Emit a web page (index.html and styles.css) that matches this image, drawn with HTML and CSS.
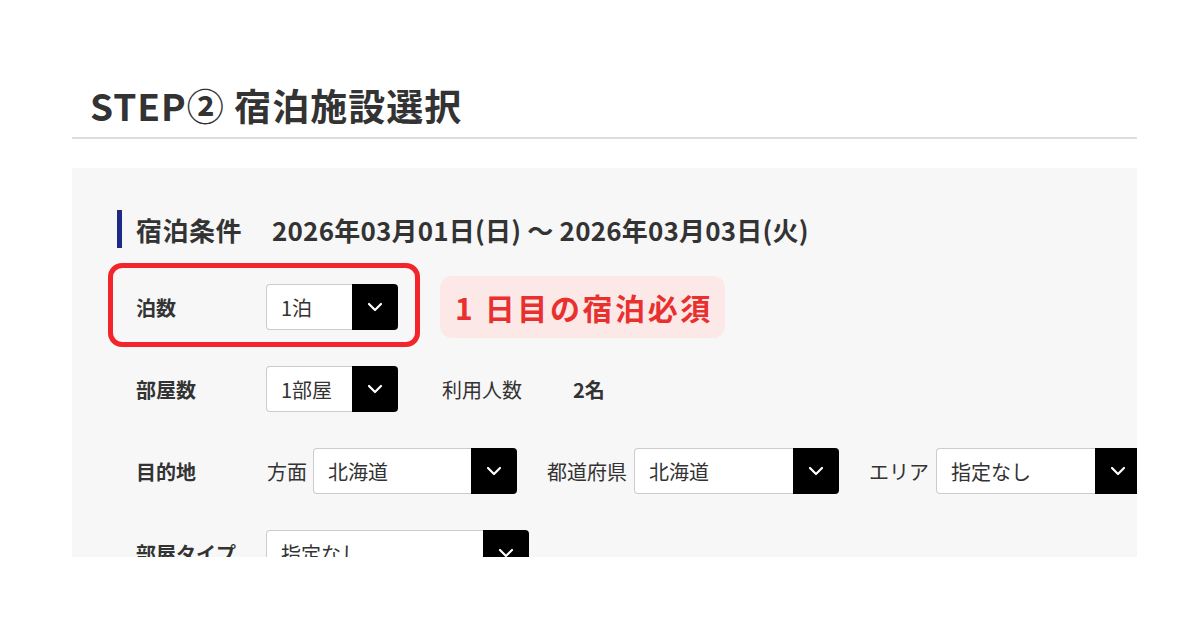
FILE: index.html
```html
<!DOCTYPE html>
<html lang="ja">
<head>
<meta charset="utf-8">
<title>STEP② 宿泊施設選択</title>
<link rel="stylesheet" href="styles.css">
</head>
<body>
<div class="page">
  <h1 class="title">STEP② 宿泊施設選択</h1>
  <section class="panel">
    <div class="cond-head">
      <span class="bar"></span>
      <span class="cond-label">宿泊条件</span>
      <span class="cond-date">2026年03月01日(日) 〜 2026年03月03日(火)</span>
    </div>
    <div class="rows">
      <div class="row">
        <div class="label">泊数</div>
        <div class="select w-s">
          <span class="val">1泊</span>
          <span class="btn"><svg width="16" height="10" viewBox="0 0 16 10"><path d="M2 2 L8 8 L14 2" fill="none" stroke="#fff" stroke-width="2.2" stroke-linecap="round" stroke-linejoin="round"/></svg></span>
        </div>
        <div class="badge">1 日目の宿泊必須</div>
        <div class="highlight"></div>
      </div>
      <div class="row">
        <div class="label">部屋数</div>
        <div class="select w-s">
          <span class="val">1部屋</span>
          <span class="btn"><svg width="16" height="10" viewBox="0 0 16 10"><path d="M2 2 L8 8 L14 2" fill="none" stroke="#fff" stroke-width="2.2" stroke-linecap="round" stroke-linejoin="round"/></svg></span>
        </div>
        <span class="people">利用人数</span>
        <span class="people-num">2名</span>
      </div>
      <div class="row">
        <div class="label">目的地</div>
        <span class="sub first">方面</span>
        <div class="select w-m">
          <span class="val">北海道</span>
          <span class="btn"><svg width="16" height="10" viewBox="0 0 16 10"><path d="M2 2 L8 8 L14 2" fill="none" stroke="#fff" stroke-width="2.2" stroke-linecap="round" stroke-linejoin="round"/></svg></span>
        </div>
        <span class="sub">都道府県</span>
        <div class="select w-m2">
          <span class="val">北海道</span>
          <span class="btn"><svg width="16" height="10" viewBox="0 0 16 10"><path d="M2 2 L8 8 L14 2" fill="none" stroke="#fff" stroke-width="2.2" stroke-linecap="round" stroke-linejoin="round"/></svg></span>
        </div>
        <span class="sub">エリア</span>
        <div class="select w-m2">
          <span class="val">指定なし</span>
          <span class="btn"><svg width="16" height="10" viewBox="0 0 16 10"><path d="M2 2 L8 8 L14 2" fill="none" stroke="#fff" stroke-width="2.2" stroke-linecap="round" stroke-linejoin="round"/></svg></span>
        </div>
      </div>
      <div class="row">
        <div class="label">部屋タイプ</div>
        <div class="select w-l">
          <span class="val">指定なし</span>
          <span class="btn"><svg width="16" height="10" viewBox="0 0 16 10"><path d="M2 2 L8 8 L14 2" fill="none" stroke="#fff" stroke-width="2.2" stroke-linecap="round" stroke-linejoin="round"/></svg></span>
        </div>
      </div>
    </div>
  </section>
</div>
</body>
</html>
```

FILE: styles.css
```css
html, body {
  margin: 0;
  padding: 0;
  background: #ffffff;
}
body {
  font-family: "Noto Sans CJK JP", "Noto Sans", sans-serif;
  color: #333333;
}
.page {
  width: 1065px;
  margin-left: 72px;
}
.title {
  margin: 0;
  padding: 83px 0 10px 18px;
  font-size: 37px;
  line-height: 44px;
  font-weight: 700;
  letter-spacing: 1px;
  color: #333333;
  border-bottom: 2px solid #dddddd;
}
.panel {
  margin-top: 29px;
  height: 389px;
  box-sizing: border-box;
  background: #f7f7f7;
  padding: 42px 0 0 45px;
  overflow: hidden;
}
.cond-head {
  display: flex;
  align-items: center;
  height: 38px;
  white-space: nowrap;
}
.bar {
  width: 5px;
  height: 38px;
  background: #1f2a88;
  margin-right: 14px;
  flex-shrink: 0;
}
.cond-label {
  font-size: 26px;
  font-weight: 700;
  letter-spacing: 0.5px;
  margin-right: 30px;
}
.cond-date {
  font-size: 26px;
  font-weight: 700;
  letter-spacing: 0.2px;
}
.rows {
  display: flex;
  flex-direction: column;
  gap: 36px;
  margin-top: 36px;
  padding-left: 19px;
}
.row {
  position: relative;
  display: flex;
  align-items: center;
  height: 46px;
  white-space: nowrap;
}
.label {
  width: 130px;
  flex-shrink: 0;
  font-size: 20px;
  font-weight: 700;
}
.select {
  display: flex;
  height: 46px;
  flex-shrink: 0;
}
.w-s { width: 132px; }
.w-m { width: 204px; }
.w-m2 { width: 205px; }
.w-l { width: 263px; }
.val {
  flex: 1;
  display: flex;
  align-items: center;
  padding-left: 14px;
  box-sizing: border-box;
  background: #ffffff;
  border: 1px solid #cccccc;
  border-right: none;
  border-radius: 4px 0 0 4px;
  font-size: 20px;
  color: #333333;
}
.btn {
  width: 46px;
  height: 46px;
  flex-shrink: 0;
  background: #000000;
  border-radius: 0 4px 4px 0;
  display: flex;
  align-items: center;
  justify-content: center;
}
.badge {
  margin-left: 42px;
  height: 62px;
  padding: 0 12px 0 15px;
  display: flex;
  align-items: center;
  background: #fde8e8;
  border-radius: 12px;
  font-size: 30px;
  font-weight: 700;
  letter-spacing: 2.6px;
  color: #e8312f;
}
.highlight {
  position: absolute;
  left: -28px;
  top: -21px;
  width: 312px;
  height: 84px;
  box-sizing: border-box;
  border: 5px solid #f3242b;
  border-radius: 14px;
}
.people {
  margin-left: 44px;
  font-size: 20px;
}
.people-num {
  margin-left: 51px;
  font-size: 20px;
  font-weight: 700;
}
.sub {
  font-size: 20px;
  margin: 0 7px 0 30px;
}
.sub.first {
  margin-left: 1px;
  margin-right: 6px;
}
```
